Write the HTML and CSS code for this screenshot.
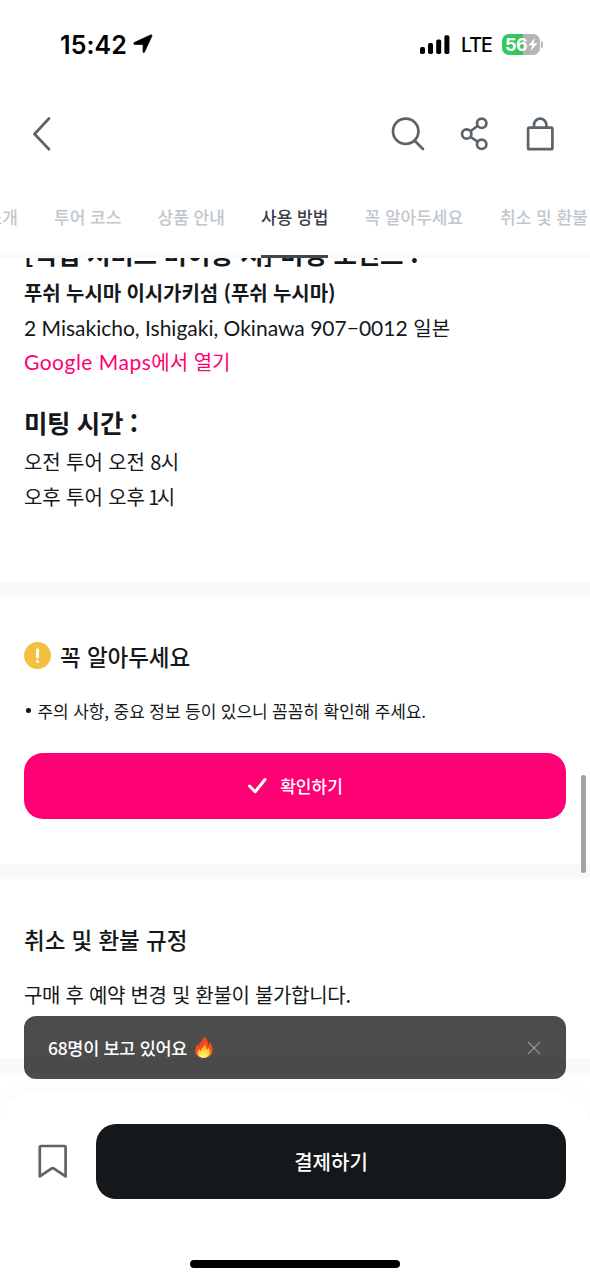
FILE: index.html
```html
<!DOCTYPE html>
<html lang="ko">
<head>
<meta charset="utf-8">
<meta name="viewport" content="width=device-width, initial-scale=1">
<title>사용 방법</title>
<link rel="stylesheet" href="styles.css">
</head>
<body>
<div class="screen">
  <header class="header">
    <div class="status">
      <span class="time">15:42</span>
      <svg class="location" width="20" height="20" viewBox="0 0 20 20"><path d="M1.300 8.500 17.800.9c.7-.3 1.400.4 1.100 1.100L11.500 18c-.4 1-1.400.8-1.400-.3v-6.500c0-.5-.2-.8-.7-.8H1.600C.6 10.400.500 8.900 1.300 8.500Z"/></svg>
      <svg class="signal" width="30" height="19" viewBox="0 0 30 19"><rect y="12" width="5" height="7" rx="1.7"/><rect x="8" y="8" width="5" height="11" rx="1.7"/><rect x="16.2" y="4.4" width="5" height="14.6" rx="1.7"/><rect x="24.4" y=".3" width="5" height="18.7" rx="1.7"/></svg>
      <span class="network">LTE</span>
      <span class="battery">
        <span class="battery-level">56</span>
        <svg class="bolt" width="10" height="13" viewBox="0 0 10 13"><path d="M7 0 .3 7.3h3.8L2.7 13l6.900-7.700H5.700Z"/></svg>
      </span>
      <i class="battery-cap"></i>
    </div>
    <nav class="toolbar">
      <svg class="icon" width="22" height="36" viewBox="0 0 22 36"><path d="M18 2.500 3.500 18 18 33.200"/></svg>
      <svg class="icon icon-search" width="36" height="36" viewBox="0 0 36 36"><circle cx="15.700" cy="15.300" r="12.700"/><path d="m24.700 24.700 8.300 8.300"/></svg>
      <svg class="icon icon-share" width="30" height="36" viewBox="0 0 30 36"><circle cx="6.700" cy="18" r="4.700"/><circle cx="21.700" cy="7.300" r="4.700"/><circle cx="21.700" cy="28.300" r="4.700"/><path d="m10.700 15 6.800-5M10.700 21l6.800 4.700"/></svg>
      <svg class="icon icon-bag" width="30" height="36" viewBox="0 0 30 36"><rect x="3.100" y="11.700" width="24.300" height="21.500" rx="1.200"/><path d="M9 11.500V8.900a6.200 6.200 0 0 1 12.400 0v2.600"/></svg>
    </nav>
    <nav class="tabs">
      <a class="tab tab-intro">소개</a>
      <a class="tab tab-course">투어 코스</a>
      <a class="tab tab-product">상품 안내</a>
      <a class="tab tab-active">사용 방법</a>
      <a class="tab tab-notice">꼭 알아두세요</a>
      <a class="tab tab-refund">취소 및 환불</a>
    </nav>
  </header>

  <main class="content">
    <section class="section usage">
      <h2 class="meeting-title meeting-point">[픽업 서비스 미이용 시] 미팅 포인트 :</h2>
      <p class="line place">푸쉬 누시마 이시가키섬 (푸쉬 누시마)</p>
      <p class="line"><span class="address">2 Misakicho, Ishigaki, Okinawa 907−0012</span> 일본</p>
      <p class="line"><a class="map-link"><span class="map-name">Google Maps</span>에서 열기</a></p>
      <h2 class="meeting-title meeting-time">미팅 시간 :</h2>
      <p class="line hours">오전 투어 오전 <span class="hour">8</span>시</p>
      <p class="line hours">오후 투어 오후 <span class="hour hour-one">1</span>시</p>
    </section>
    <section class="section notice">
      <h3 class="section-title"><svg class="alert" width="27" height="27" viewBox="0 0 27 27"><circle cx="13.500" cy="13.500" r="13.500" fill="#f3c040"/><path d="M13.500 7.700v7.400M13.500 19.500v.1" stroke="#fff" stroke-width="3" stroke-linecap="round"/></svg>꼭 알아두세요</h3>
      <p class="bullet">주의 사항, 중요 정보 등이 있으니 꼼꼼히 확인해 주세요.</p>
      <button class="confirm"><svg width="20" height="18" viewBox="0 0 20 18"><path d="m2.500 9 5.700 5.800L18 2.500" fill="none" stroke="#fff" stroke-width="3" stroke-linecap="round" stroke-linejoin="round"/></svg><span>확인하기</span></button>
    </section>
    <section class="section refund">
      <h3 class="section-title">취소 및 환불 규정</h3>
      <p class="refund-text">구매 후 예약 변경 및 환불이 불가합니다.</p>
    </section>
  </main>

  <footer class="footer">
    <div class="actions">
      <svg class="icon" width="32" height="36" viewBox="0 0 32 36"><path d="M4 3h23.400a1.200 1.200 0 0 1 1.200 1.200v29.200L17 25.700q-1.300-.9-2.600 0L2.800 33.400V4.200A1.200 1.200 0 0 1 4 3Z"/></svg>
      <button class="pay">결제하기</button>
    </div>
    <i class="home-bar"></i>
  </footer>

  <div class="toast">
    <span class="toast-text">68명이 보고 있어요</span>
    <svg class="flame" width="18" height="23" viewBox="0 0 20 24">
      <defs><linearGradient id="fire" x1="0" y1="0" x2="0" y2="1"><stop offset="0" stop-color="#e9452b"/><stop offset=".6" stop-color="#ff4b16"/><stop offset="1" stop-color="#ff9d21"/></linearGradient><linearGradient id="core" x1="0" y1="0" x2="0" y2="1"><stop offset="0" stop-color="#ff9b19"/><stop offset=".55" stop-color="#ffd735"/><stop offset="1" stop-color="#fff2a0"/></linearGradient></defs>
      <path fill="url(#fire)" d="M9 0c4 1.500 6.200 4.600 5.500 9 1.400-.7 1.700-2 1.300-3.500C18.400 8 20 11.500 19.500 15c-.6 5.200-4.400 8.500-9.800 8.500C4 23.500.5 20 .4 15.300.3 12 1.300 9.500 3 8c0 1.500.2 2.500 1 3.200C3.900 6.500 9.500 5 9 0Z"/>
      <path fill="url(#core)" d="M11.200 7c.2 3.500 1.600 4.600 1.600 7.200 1.300-.3 1.900-1.200 2-2.300 1.500 2 2 4 1.300 6.200-.8 3.400-3.200 5.400-6.400 5.400-3.700 0-6.300-2.500-6.300-5.800 0-2 .8-3.500 1.800-4.400 0 1.500.5 2.500 1.600 2.900C6.300 12.500 11 11.500 11.200 7Z"/>
    </svg>
    <svg class="close" width="14" height="14" viewBox="0 0 14 14"><path d="m1 1 12 12M13 1 1 13"/></svg>
  </div>
  <i class="scrollbar"></i>
</div>
</body>
</html>
```
FILE: styles.css
```css
* { box-sizing: border-box; }
body { margin: 0; background: #fff; font-family: "Noto Sans CJK KR", sans-serif; color: #14181b; }
h2, h3, p { margin: 0; white-space: nowrap; }
button { border: 0; padding: 0; color: #fff; font-family: inherit; }
svg, i { display: block; flex: none; }
.screen { position: relative; display: flex; flex-direction: column; width: 590px; height: 1280px; overflow: hidden; }

.header { flex: none; height: 258px; border-bottom: 3px solid #f8f9fb; }
.status { display: flex; align-items: center; height: 88px; padding-left: 60px; font-family: Inter, sans-serif; color: #000; }
.time { width: 73px; padding-top: 1px; font-size: 25px; font-weight: 600; letter-spacing: .1px; white-space: nowrap; }
.location { stroke: #000; stroke-width: .8; stroke-linejoin: round; }
.signal { margin-left: 267px; }
.network { width: 41px; margin-left: 11px; padding-top: 1px; font-size: 19.500px; font-weight: 500; letter-spacing: -1px; }
.battery { display: flex; align-items: center; width: 38px; height: 21px; padding-left: 3px; border-radius: 7px; background: linear-gradient(90deg, #34c759 21px, #b4b4b4 21px); color: #fff; }
.battery-level { width: 23px; font-size: 18px; font-weight: 700; letter-spacing: -.6px; line-height: 21px; }
.bolt { fill: #fff; }
.battery-cap { width: 2px; height: 7px; margin-left: 1px; border-radius: 0 2px 2px 0; background: #b4b4b4; }
.toolbar { display: flex; height: 92px; align-items: center; padding-left: 31px; }
.icon { fill: none; stroke: #5b646b; stroke-width: 2.700; stroke-linecap: round; stroke-linejoin: round; }
.icon-search { margin-left: 337px; }
.icon-share { margin-left: 34px; }
.icon-bag { margin-left: 35px; }
.tabs { display: flex; height: 78px; font-size: 17px; font-weight: 500; line-height: 73px; white-space: nowrap; color: #c0c7cc; }
.tab { flex: none; width: 67px; margin-right: 36.500px; }
.tab-intro { width: 31px; margin-left: -13.500px; }
.tab-active { border-bottom: 3px solid #41484e; height: 78px; color: #3a4147; }
.tab-notice { width: 99px; }

.content { flex: 1; overflow: hidden; }
.section { padding: 0 24px; border-bottom: 15px solid #f7f9fb; }
.usage { display: flow-root; height: 338.500px; }
.meeting-title { font-size: 25.500px; font-weight: 700; letter-spacing: -.2px; line-height: 40px; }
.meeting-point { margin: -25px 0 3px; }
.meeting-time { margin: 22px 0 3.500px; letter-spacing: -.4px; }
.line { font-size: 20px; line-height: 34.500px; }
.place { font-weight: 700; letter-spacing: -.1px; }
.hours { letter-spacing: -.1px; }
.hour { display: inline-block; width: 10.500px; }
.hour-one { width: 6.500px; text-indent: -2px; }
.address, .map-name { font-family: Lato, sans-serif; font-size: 21px; }
.map-name { letter-spacing: .5px; }
.map-link { color: #ff0073; }
.notice { height: 282.500px; padding-top: 39px; }
.section-title { display: flex; align-items: center; gap: 9px; height: 40px; font-size: 22.500px; font-weight: 500; letter-spacing: -.05px; }
.bullet { display: flex; align-items: center; gap: 7px; height: 34px; margin-top: 18px; padding-left: 2px; font-size: 17px; letter-spacing: -.1px; }
.bullet::before { width: 4.500px; height: 4.500px; border-radius: 50%; background: #14181b; content: ""; }
.confirm { display: flex; align-items: center; justify-content: center; gap: 13px; width: 100%; height: 66px; margin-top: 25px; border-radius: 19px; background: #ff0075; font-size: 17px; font-weight: 500; }
.refund { height: 194px; padding-top: 39.500px; }
.refund-text { margin-top: 19px; font-size: 20px; letter-spacing: -.3px; line-height: 34px; }

.footer { flex: none; height: 187px; border-radius: 32px 32px 0 0; background: #fff; box-shadow: 0 -2px 24px rgba(0, 0, 0, .03); }
.actions { display: flex; align-items: center; gap: 27px; height: 136px; padding: 0 24px 0 37px; }
.pay { flex: 1; height: 75px; border-radius: 20px; background: #14181b; font-size: 20px; font-weight: 500; }
.home-bar { width: 210px; height: 8px; margin: 31px auto 0; border-radius: 4px; background: #000; }
.toast { position: absolute; top: 1016px; left: 24px; display: flex; align-items: center; width: 542px; height: 63px; padding: 0 25px 0 24px; border-radius: 12px; background: rgba(0, 0, 0, .7); color: #fff; font-size: 17.500px; font-weight: 500; }
.toast-text { width: 147px; letter-spacing: -.3px; white-space: nowrap; }
.close { margin-left: auto; fill: none; stroke: #8e969c; stroke-width: 1.300; }
.scrollbar { position: absolute; top: 775px; right: 4px; width: 5px; height: 98px; border-radius: 3px; background: #a2a2a2; }
```
